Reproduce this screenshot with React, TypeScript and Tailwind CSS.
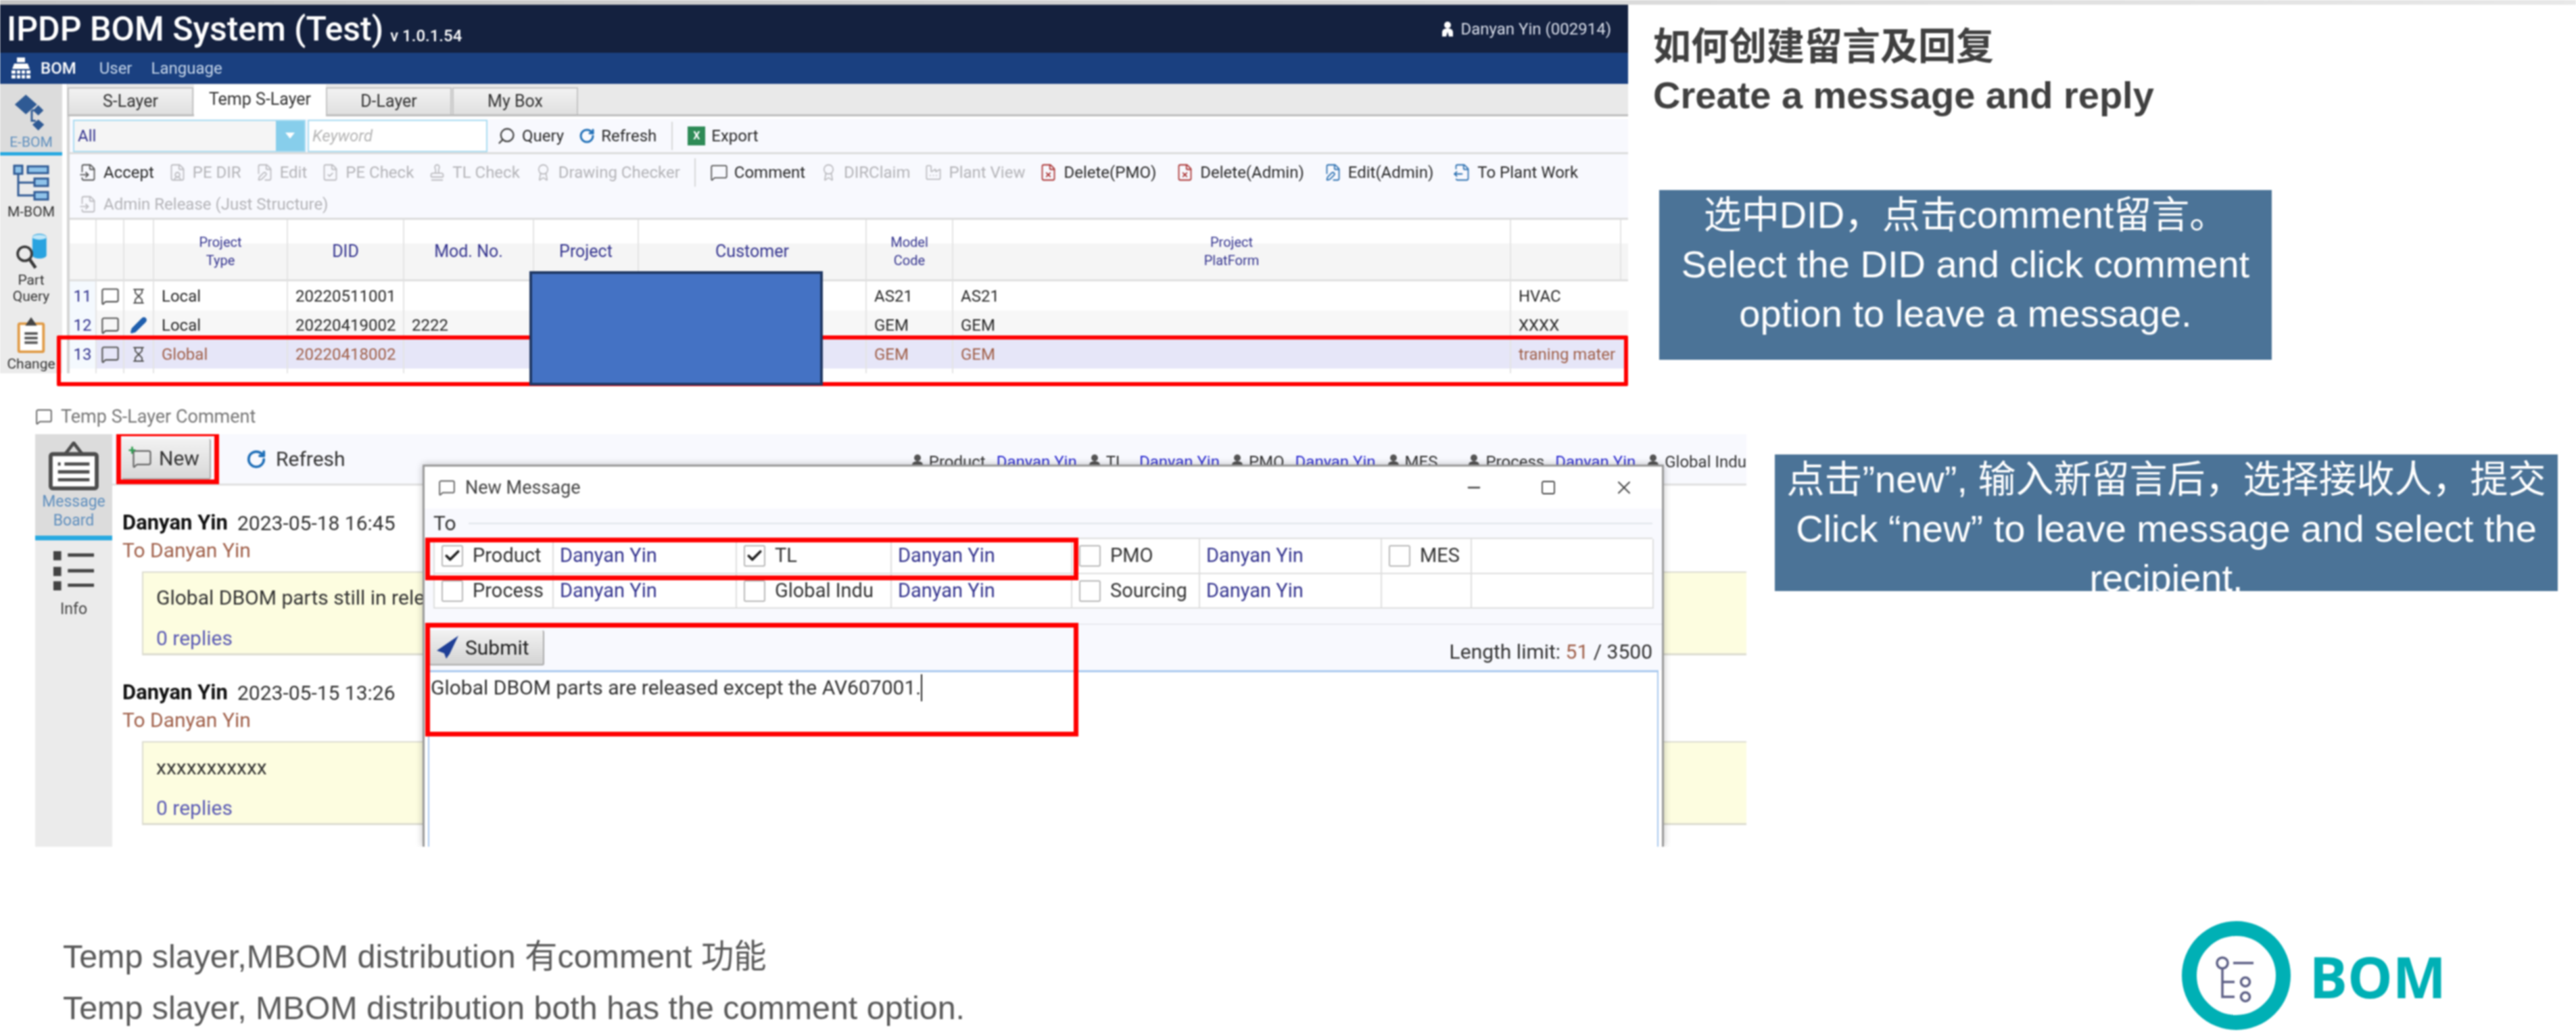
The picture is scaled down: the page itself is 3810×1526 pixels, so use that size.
import { Award, Check, FileCheck, FileInput, FileOutput, FilePen, FileUser, FileX, Factory, Hourglass, MessageSquare, Minus, Pencil, RotateCw, Search, Square, Stamp, X } from "lucide-react";

const navy = "text-[#34348f]";

function PersonIcon({ className }: { className?: string }) {
  return (
    <svg viewBox="0 0 20 24" className={className} fill="currentColor">
      <circle cx="10" cy="6" r="5" />
      <path d="M2 23v-6c0-4 3-6 8-6s8 2 8 6v6h-6l-2-7-2 7z" />
    </svg>
  );
}

function ToolBtn({ icon, label, off }: { icon: React.ReactNode; label: string; off?: boolean }) {
  return (
    <span className={`flex items-center gap-[9px] text-[24px] whitespace-nowrap ${off ? "text-[#b4b4b8]" : "text-[#2a2a2a]"}`}>
      {icon}
      {label}
    </span>
  );
}

const ic = "w-[27px] h-[30px] stroke-[1.6]";
const offIc = `${ic} text-[#bcbcc0]`;
const onIc = `${ic} text-[#555]`;

function EBomIcon() {
  return (
    <svg viewBox="0 0 54 56" className="w-[54px] h-[54px]" fill="#2f5a94">
      <path d="M19 0l17 15-17 15L2 15z" />
      <path d="M38 16l8 8-8 8-8-8zM38 38l9 8-9 9-9-9z" />
      <path d="M28 24v16h6M28 24h5" fill="none" stroke="#2f5a94" strokeWidth="3" />
    </svg>
  );
}

function MBomIcon() {
  return (
    <svg viewBox="0 0 54 54" className="w-[54px] h-[54px]" fill="#8fc3ea" stroke="#2f5a94" strokeWidth="3">
      <rect x="2" y="2" width="12" height="12" />
      <rect x="22" y="3" width="30" height="10" />
      <rect x="32" y="21" width="20" height="11" />
      <rect x="32" y="41" width="20" height="11" />
      <path d="M8 14v32h24M8 27h24" fill="none" />
    </svg>
  );
}

function PartIcon() {
  return (
    <svg viewBox="0 0 56 56" className="w-[56px] h-[54px]">
      <path d="M30 6c0-7 22-7 22 0v28c0 7-22 7-22 0z" fill="#29a3e0" />
      <ellipse cx="41" cy="6" rx="11" ry="4" fill="#bfe6f8" />
      <circle cx="18" cy="32" r="11" fill="none" stroke="#3a3a3a" strokeWidth="4" />
      <path d="M26 41l9 13" stroke="#3a3a3a" strokeWidth="5" />
    </svg>
  );
}

function ChangeIcon() {
  return (
    <svg viewBox="0 0 44 56" className="w-[44px] h-[54px]">
      <rect x="3" y="11" width="38" height="43" rx="2" fill="#fff" stroke="#e09a45" strokeWidth="4" />
      <path d="M22 1l9 13H13z" fill="#444" />
      <path d="M12 26h20M12 33h20M12 40h20" stroke="#555" strokeWidth="4" />
    </svg>
  );
}

function SideItem({ icon, label, box, blue }: { icon: React.ReactNode; label: React.ReactNode; box: string; blue?: boolean }) {
  return (
    <div className={`shrink-0 flex flex-col items-center text-[21px] leading-[24px] ${box} ${blue ? "text-[#5f8fbe]" : "text-[#333]"}`}>
      {icon}
      <div className="mt-[4px] text-center">{label}</div>
    </div>
  );
}

const colClass = "grid grid-cols-[40px_41px_44px_198px_172px_192px_155px_337px_128px_825px_163px]";

const rows = [
  { n: "11", type: "Local", did: "20220511001", mod: "", code: "AS21", plat: "AS21", last: "HVAC", bg: "bg-white", text: "text-[#2a2a2a]", edit: false },
  { n: "12", type: "Local", did: "20220419002", mod: "2222", code: "GEM", plat: "GEM", last: "XXXX", bg: "bg-[#f7f7f7]", text: "text-[#2a2a2a]", edit: true },
  { n: "13", type: "Global", did: "20220418002", mod: "", code: "GEM", plat: "GEM", last: "traning mater", bg: "bg-[#e6e6f8]", text: "text-[#a0604a]", edit: false },
];

function HeadCell({ children, small }: { children?: React.ReactNode; small?: boolean }) {
  return (
    <div className={`flex items-center justify-center text-center pt-[5px] border-r-2 border-[#e4e4e4] ${navy} ${small ? "text-[20px] leading-[27px]" : "text-[25px]"}`}>
      {children}
    </div>
  );
}

function Cell({ children }: { children?: React.ReactNode }) {
  return <div className="flex items-center px-[11px] border-r-2 border-[#e4e4e4] whitespace-nowrap overflow-hidden">{children}</div>;
}

function MainApp() {
  return (
    <div className="w-[2408px] h-[545px] flex flex-col bg-white">
      <div className="h-[71px] shrink-0 bg-[#14213f] flex items-center justify-between pl-[10px] pr-[25px] text-white">
        <div className="flex items-end gap-[10px]">
          <span className="text-[50px] leading-[56px] font-medium">IPDP BOM System (Test)</span>
          <span className="text-[24px] font-medium">v 1.0.1.54</span>
        </div>
        <div className="flex items-center gap-[10px] text-[24px] text-[#d9deea]">
          <PersonIcon className="w-[20px] h-[28px] text-white" />
          Danyan Yin (002914)
        </div>
      </div>
      <div className="h-[46px] shrink-0 bg-[#1a4080] flex items-center pl-[16px] text-[24px] text-[#c6d6ea]">
        <svg viewBox="0 0 30 32" className="w-[30px] h-[32px]" fill="#fff">
          <rect x="9" y="0" width="12" height="7" />
          <path d="M5 9h20l3 8H2zM1 19h6v5H1zM9 19h5v5H9zM16 19h5v5h-5zM23 19h6v5h-6zM1 26h6v5H1zM9 26h5v5H9zM16 26h5v5h-5zM23 26h6v5h-6z" />
        </svg>
        <span className="ml-[14px] text-white font-medium">BOM</span>
        <span className="ml-[34px]">User</span>
        <span className="ml-[28px]">Language</span>
      </div>
      <div className="flex-1 flex min-h-0">
        <div className="w-[92px] bg-[#ebebeb] flex flex-col">
          <SideItem box="h-[106px] pt-[16px] bg-[#dcdcdc] border-b-[5px] border-[#27a9e1]" blue icon={<EBomIcon />} label="E-BOM" />
          <SideItem box="h-[95px] pt-[13px]" icon={<MBomIcon />} label="M-BOM" />
          <SideItem box="h-[125px] pt-[20px]" icon={<PartIcon />} label={<>Part<br />Query</>} />
          <SideItem box="h-[102px] pt-[18px]" icon={<ChangeIcon />} label="Change" />
        </div>
        <div className="flex-1 flex flex-col border-l-[4px] border-[#d4d4d4] ml-[7px]">
          <div className="h-[48px] shrink-0 -ml-[3px] bg-[#e9e9e9] flex items-end text-[25px] text-[#333] border-b-[3px] border-[#bdbdbd]">
            {["S-Layer", "Temp S-Layer", "D-Layer", "My Box"].map((t, i) => (
              <div
                key={t}
                className={
                  i === 1
                    ? "w-[195px] h-[47px] -mb-[3px] bg-white flex items-center justify-center pb-[4px]"
                    : "w-[186px] h-[40px] mr-[1px] border-2 border-b-0 border-[#c4c4c4] bg-gradient-to-b from-[#f2f2f2] to-[#e0e0e0] flex items-center justify-center"
                }
              >
                {t}
              </div>
            ))}
          </div>
          <div className="h-[52px] shrink-0 mt-[4px] bg-[#f8f9fe] border-b-[3px] border-[#dcdcdc] flex items-center pl-[5px] text-[24px] text-[#2a2a2a]">
            <div className="w-[344px] h-[48px] flex border-2 border-[#a9dcf2] bg-[#f5f5f5]">
              <span className={`flex-1 pl-[5px] leading-[44px] ${navy}`}>All</span>
              <span className="w-[42px] bg-[#87ceeb] flex items-center justify-center">
                <span className="w-0 h-0 border-x-[7px] border-x-transparent border-t-[9px] border-t-white" />
              </span>
            </div>
            <div className="w-[266px] h-[48px] ml-[3px] border-2 border-[#a9dcf2] bg-white pl-[5px] leading-[44px] italic text-[#b5b5b5]">Keyword</div>
            <div className="ml-[14px] flex items-center gap-[22px]">
              <ToolBtn icon={<Search className="w-[28px] h-[30px] -scale-x-100 stroke-[2] text-[#444]" />} label="Query" />
              <ToolBtn icon={<RotateCw className="w-[24px] h-[32px] stroke-[3] text-[#2170b8]" />} label="Refresh" />
              <span className="w-[2px] h-[42px] bg-[#d8d8d8]" />
              <ToolBtn
                icon={<span className="w-[26px] h-[28px] bg-[#2e8b57] text-white text-[16px] font-bold flex items-center justify-center">X</span>}
                label="Export"
              />
            </div>
          </div>
          <div className="h-[97px] shrink-0 bg-[#f8f9fe] border-b-[3px] border-[#dcdcdc] flex flex-col pl-[14px] pt-[7px] gap-[7px]">
            <div className="flex items-center gap-[21px] h-[40px]">
              <ToolBtn icon={<FileInput className={onIc} />} label="Accept" />
              <ToolBtn off icon={<FileUser className={offIc} />} label="PE DIR" />
              <ToolBtn off icon={<FilePen className={offIc} />} label="Edit" />
              <ToolBtn off icon={<FileCheck className={offIc} />} label="PE Check" />
              <ToolBtn off icon={<Stamp className={offIc} />} label="TL Check" />
              <ToolBtn off icon={<Award className={offIc} />} label="Drawing Checker" />
              <span className="w-[2px] h-[42px] bg-[#d8d8d8]" />
              <ToolBtn icon={<MessageSquare className={onIc} />} label="Comment" />
              <ToolBtn off icon={<Award className={offIc} />} label="DIRClaim" />
              <ToolBtn off icon={<Factory className={offIc} />} label="Plant View" />
              <div className="flex items-center gap-[29px]">
                <ToolBtn icon={<FileX className={`${ic} text-[#a33]`} />} label="Delete(PMO)" />
                <ToolBtn icon={<FileX className={`${ic} text-[#a33]`} />} label="Delete(Admin)" />
                <ToolBtn icon={<FilePen className={`${ic} text-[#2a6fb0]`} />} label="Edit(Admin)" />
                <ToolBtn icon={<FileOutput className={`${ic} text-[#2a6fb0]`} />} label="To Plant Work" />
              </div>
            </div>
            <div className="flex items-center h-[40px]">
              <ToolBtn off icon={<FileInput className={offIc} />} label="Admin Release (Just Structure)" />
            </div>
          </div>
          <div className={`${colClass} h-[91px] shrink-0 bg-gradient-to-b from-white from-40% to-[#f5f5f5] to-40% border-b-[3px] border-[#e0e0e0]`}>
            <HeadCell />
            <HeadCell />
            <HeadCell />
            <HeadCell small>Project<br />Type</HeadCell>
            <HeadCell>DID</HeadCell>
            <HeadCell>Mod. No.</HeadCell>
            <HeadCell>Project</HeadCell>
            <HeadCell>Customer</HeadCell>
            <HeadCell small>Model<br />Code</HeadCell>
            <HeadCell small>Project<br />PlatForm</HeadCell>
            <HeadCell />
          </div>
          {rows.map((r) => (
            <div key={r.n} className={`${colClass} h-[43px] shrink-0 text-[24px] ${r.bg} ${r.text}`}>
              <div className={`flex items-center justify-center bg-[#f4f9fe] border-r-2 border-[#e4e4e4] ${navy}`}>{r.n}</div>
              <div className="flex items-center justify-center border-r-2 border-[#e4e4e4] text-[#555]">
                <MessageSquare className="w-[28px] h-[30px] stroke-[1.8]" />
              </div>
              <div className="flex items-center justify-center border-r-2 border-[#e4e4e4] text-[#555]">
                {r.edit ? <Pencil className="w-[26px] h-[28px] text-[#1f5fae] fill-[#1f5fae]" /> : <Hourglass className="w-[24px] h-[30px] stroke-[2]" />}
              </div>
              <Cell>{r.type}</Cell>
              <Cell>{r.did}</Cell>
              <Cell>{r.mod}</Cell>
              <Cell />
              <Cell />
              <Cell>{r.code}</Cell>
              <Cell>{r.plat}</Cell>
              <div className="flex items-center pl-[11px] whitespace-nowrap overflow-hidden">{r.last}</div>
            </div>
          ))}
          <div className={`${colClass} flex-1`}>
            {Array.from({ length: 10 }).map((_, i) => (
              <div key={i} className="border-r-2 border-[#e4e4e4]" />
            ))}
          </div>
        </div>
      </div>
    </div>
  );
}

function Recipient({ label }: { label: string }) {
  return (
    <span className="flex items-center gap-[7px] text-[#333]">
      <PersonIcon className="w-[20px] h-[24px] text-[#555]" />
      {label}
    </span>
  );
}

function Message({ date, body }: { date: string; body: string }) {
  return (
    <div className="pl-[15px]">
      <div className="flex items-center gap-[14px] h-[40px] text-[30px] text-[#333]">
        <span className="font-bold text-[31px] text-[#111]">Danyan Yin</span>
        {date}
      </div>
      <div className="h-[42px] leading-[42px] text-[30px] text-[#a0604a]">To Danyan Yin</div>
      <div className="mt-[10px] ml-[29px] h-[124px] bg-[#fdfde0] border-l-2 border-t-2 border-b-[3px] border-[#dcdcd0] pl-[19px] pt-[15px] text-[30px] text-[#333]">
        <div className="h-[43px] leading-[43px]">{body}</div>
        <div className="mt-[16px] text-[#5a5ab4]">0 replies</div>
      </div>
    </div>
  );
}

function CheckBox({ on }: { on?: boolean }) {
  return (
    <span className="w-[32px] h-[32px] rounded-[3px] border-2 border-[#b8b8b8] bg-white flex items-center justify-center shrink-0">
      {on && <Check className="w-[26px] h-[26px] stroke-[3.5] text-[#222]" />}
    </span>
  );
}

function ToCell({ label, on }: { label?: string; on?: boolean }) {
  return (
    <div className="flex items-center gap-[14px] pl-[10px] border-r-2 border-[#dedede] whitespace-nowrap">
      {label && <CheckBox on={on} />}
      {label}
    </div>
  );
}

function NameCell({ show = true }: { show?: boolean }) {
  return <div className={`flex items-center pl-[9px] border-r-2 border-[#dedede] ${navy}`}>{show && "Danyan Yin"}</div>;
}

function NewMessageDialog() {
  return (
    <div className="absolute left-[573px] top-[45px] bottom-0 w-[1836px] bg-white border-l-[3px] border-t-[3px] border-r-[3px] border-[#9a9a9a] shadow-[0_0_10px_rgba(0,0,0,0.25)] z-10 flex flex-col">
      <div className="h-[62px] shrink-0 flex items-center pl-[20px] pr-[40px] text-[27px] text-[#444]">
        <MessageSquare className="w-[26px] h-[30px] stroke-[1.8] text-[#666]" />
        <span className="ml-[14px]">New Message</span>
        <div className="ml-auto flex items-center gap-[84px] text-[#444]">
          <Minus className="w-[28px] h-[28px] stroke-[2]" />
          <Square className="w-[24px] h-[24px] stroke-[1.8]" />
          <X className="w-[32px] h-[32px] stroke-[1.5]" />
        </div>
      </div>
      <div className="h-[170px] shrink-0 bg-[#f8f9fe] pl-[13px] pr-[14px] flex flex-col">
        <div className="h-[43px] flex items-center text-[30px] text-[#333] gap-[18px]">
          To
          <span className="flex-1 h-[2px] bg-[#e0e4ea]" />
        </div>
        <div className="grid grid-cols-[176px_271px_229px_267px_189px_269px_133px_269px] grid-rows-[52px_51px] bg-white border-t-2 border-l-2 border-[#dedede] text-[29px] text-[#333] [&>div]:border-b-2">
          <ToCell label="Product" on />
          <NameCell />
          <ToCell label="TL" on />
          <NameCell />
          <ToCell label="PMO" />
          <NameCell />
          <ToCell label="MES" />
          <NameCell show={false} />
          <ToCell label="Process" />
          <NameCell />
          <ToCell label="Global Indu" />
          <NameCell />
          <ToCell label="Sourcing" />
          <NameCell />
          <ToCell />
          <NameCell show={false} />
        </div>
      </div>
      <div className="h-[69px] shrink-0 bg-[#f8f9fe] flex items-start justify-between pl-[7px] pr-[14px] pt-[8px] border-t-2 border-[#e8eaf0]">
        <div className="w-[170px] h-[52px] bg-gradient-to-b from-[#f2f2f2] to-[#d4d4d4] border-r-2 border-b-2 border-[#aaa] rounded-[3px] flex items-center gap-[9px] pl-[10px] text-[30px] text-[#222]">
          <svg viewBox="0 0 34 36" className="w-[34px] h-[36px]" fill="#1f3f96">
            <path d="M33 1L1 23l11 4 3 8 5-7zM33 1L13 25l7 3z" />
          </svg>
          Submit
        </div>
        <div className="mt-[14px] text-[30px] leading-[36px] text-[#333]">
          Length limit: <span className="text-[#a0604a]">51</span> / 3500
        </div>
      </div>
      <div className="flex-1 mx-[5px] border-t-[3px] border-x-2 border-[#a9c9ee] pl-[2px] text-[30px] text-[#333]">
        <span className="border-r-2 border-[#222] leading-[40px] inline-block">Global DBOM parts are released except the AV607001.</span>
      </div>
      <div className="absolute left-[1px] top-[105px] w-[966px] h-[63px] border-[7px] border-[#ff0000] z-20" />
      <div className="absolute left-[1px] top-[231px] w-[966px] h-[168px] border-[7px] border-[#ff0000] z-20" />
    </div>
  );
}

function CommentPanel() {
  return (
    <div className="ml-[52px] w-[2531px] font-['Roboto',sans-serif]">
      <div className="h-[62px] pt-[10px] flex items-center gap-[12px] text-[27px] text-[#777]">
        <MessageSquare className="w-[26px] h-[28px] stroke-[1.8] text-[#666]" />
        Temp S-Layer Comment
      </div>
      <div className="relative h-[610px] flex overflow-hidden">
        <div className="w-[114px] shrink-0 bg-[#ebebeb] flex flex-col items-center text-[23px] leading-[28px]">
          <div className="w-full h-[157px] bg-[#dcdcdc] border-b-[7px] border-[#27a9e1] flex flex-col items-center pt-[11px] text-[#5f8fbe]">
            <svg viewBox="0 0 76 74" className="w-[76px] h-[72px]">
              <rect x="3" y="19" width="70" height="52" rx="3" fill="#fff" stroke="#4d4d4d" strokeWidth="6" />
              <path d="M38 2l13 17H25z" fill="none" stroke="#4d4d4d" strokeWidth="5" />
              <path d="M14 34h4M24 34h38M14 46h48M14 58h48" stroke="#4d4d4d" strokeWidth="5" />
            </svg>
            <div className="text-center mt-[3px]">Message<br />Board</div>
          </div>
          <svg viewBox="0 0 66 64" className="w-[66px] h-[62px] mt-[14px]">
            <path d="M2 2h12v14H2zM2 26h12v14H2zM2 48h12v14H2z" fill="#444" />
            <path d="M24 8h40M24 32h40M24 54h40" stroke="#444" strokeWidth="5" />
          </svg>
          <div className="mt-[12px] text-[#444]">Info</div>
        </div>
        <div className="flex-1 min-w-0 flex flex-col bg-white">
          <div className="h-[76px] shrink-0 bg-[#f8f9fe] border-b-[3px] border-[#e0e0e0] flex items-center text-[30px] text-[#333]">
            <div className="relative shrink-0 ml-[14px] w-[132px] h-[60px] bg-gradient-to-b from-[#f2f2f2] to-[#d8d8d8] border-r-2 border-b-2 border-[#aaa] rounded-[3px] flex items-center justify-center gap-[10px]">
              <span className="relative">
                <span className="absolute -left-[5px] -top-[6px] text-[20px] leading-none font-bold text-[#2e9b4f]">+</span>
                <MessageSquare className="w-[30px] h-[32px] stroke-[1.8] text-[#666]" />
              </span>
              New
              <div className="absolute -left-[8px] -top-[11px] w-[152px] h-[78px] border-[7px] border-[#ff0000]" />
            </div>
            <div className="shrink-0 ml-[52px] flex items-center gap-[14px]">
              <RotateCw className="w-[30px] h-[36px] stroke-[3] text-[#2170b8]" />
              Refresh
            </div>
            <div className="ml-auto mt-[8px] flex items-center gap-[16px] text-[24px] whitespace-nowrap">
              <Recipient label="Product" />
              <span className="text-[#2a2ad0]">Danyan Yin</span>
              <Recipient label="TL" />
              <span className="ml-[6px] text-[#2a2ad0]">Danyan Yin</span>
              <Recipient label="PMO" />
              <span className="text-[#2a2ad0]">Danyan Yin</span>
              <Recipient label="MES" />
              <span className="ml-[12px]" />
              <Recipient label="Process" />
              <span className="text-[#2a2ad0]">Danyan Yin</span>
              <Recipient label="Global Indu" />
            </div>
          </div>
          <div className="flex flex-col pt-[35px] gap-[35px]">
            <Message date="2023-05-18 16:45" body="Global DBOM parts still in release" />
            <Message date="2023-05-15 13:26" body="xxxxxxxxxxx" />
          </div>
        </div>
        <NewMessageDialog />
      </div>
    </div>
  );
}

export default function App() {
  return (
    <div className="w-[3810px] h-[1526px] bg-white overflow-hidden flex flex-col blur-[1px] font-['Liberation_Sans','Noto_Sans_CJK_SC',sans-serif]">
      <div className="h-[7px] shrink-0 bg-gradient-to-r from-[#c4c4c4] to-[#e8e8e8]" />
      <div className="h-[573px] shrink-0 flex">
        <div className="relative font-['Roboto','Noto_Sans_CJK_SC',sans-serif]">
          <MainApp />
          <div className="absolute left-[84px] top-[489px] w-[2324px] h-[75px] border-[6px] border-[#ff0000] rounded-[2px]" />
          <div className="absolute left-[783px] top-[394px] w-[434px] h-[169px] bg-[#4472c4] border-[4px] border-[#1f3864]" />
        </div>
        <div className="pl-[37px] text-[#404040] font-bold">
          <div className="text-[56px] leading-[70px] mt-[27px]">如何创建留言及回复</div>
          <div className="text-[56px] leading-[70px] mt-[2px]">Create a message and reply</div>
          <div className="mt-[105px] ml-[9px] w-[906px] h-[251px] bg-[#4b7397] text-white font-normal text-[56px] leading-[73px] text-center">
            选中DID，点击comment留言。<br />
            Select the DID and click comment<br />
            option to leave a message.
          </div>
        </div>
      </div>
      <div className="h-[672px] shrink-0 flex">
        <CommentPanel />
        <div className="mt-[92px] ml-[42px] w-[1158px] h-[202px] bg-[#4b7397] text-white text-[56px] leading-[73px] text-center overflow-hidden">
          点击”new”, 输入新留言后，选择接收人，提交<br />
          Click “new” to leave message and select the<br />
          recipient.
        </div>
      </div>
      <div className="h-[274px] shrink-0 flex justify-between pl-[93px] pr-[192px]">
        <div className="pt-[124px] text-[48.4px] leading-[76px] text-[#595959]">
          <div>Temp slayer,MBOM distribution 有comment 功能</div>
          <div>Temp slayer, MBOM distribution both has the comment option.</div>
        </div>
        <div className="flex items-start gap-[28px] pt-[110px]">
          <svg viewBox="0 0 161 161" className="w-[161px] h-[161px]">
            <circle cx="80.5" cy="80.5" r="69.5" fill="none" stroke="#00b0b5" strokeWidth="22" />
            <g fill="none" stroke="#5c5f85" strokeWidth="3.5">
              <circle cx="60" cy="62" r="8" />
              <path d="M76 62h30M60 70v42h18M60 90h18" />
              <circle cx="94" cy="90" r="6.5" />
              <circle cx="94" cy="112" r="6.5" />
            </g>
          </svg>
          <span className="text-[84px] leading-[100px] mt-[32px] font-bold text-[#00b0b5] font-['Open_Sans',sans-serif]">BOM</span>
        </div>
      </div>
    </div>
  );
}
